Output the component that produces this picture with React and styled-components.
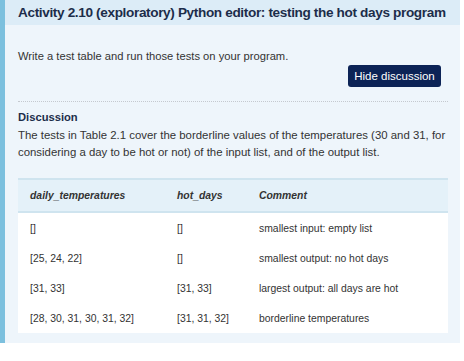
import styled, { createGlobalStyle } from "styled-components";

const GlobalStyle = createGlobalStyle`
  body {
    margin: 0;
    background: #ffffff;
    font-family: "Liberation Sans", Arial, sans-serif;
  }
`;

const Panel = styled.div`
  width: 460px;
  height: 343px;
  background: #eef5fb;
  border-left: 5px solid #7cc0de;
  box-sizing: border-box;
  overflow: hidden;
`;

const TitleBar = styled.div`
  background: #dcecf7;
  height: 25px;
  padding: 0 0 0 13px;
  display: flex;
  align-items: center;
`;

const Title = styled.h2`
  margin: 0;
  font-size: 13.6px;
  font-weight: bold;
  letter-spacing: -0.36px;
  color: #1c2d4a;
  white-space: nowrap;
`;

const Body = styled.div`
  padding: 0 8px 0 13px;
`;

const Intro = styled.p`
  margin: 25px 0 0;
  font-size: 11.2px;
  color: #333;
`;

const ButtonRow = styled.div`
  display: flex;
  justify-content: flex-end;
  margin-top: 3px;
  padding-right: 11px;
`;

const Button = styled.button`
  background: #0c2356;
  color: #fff;
  border: none;
  border-radius: 3px;
  font-family: inherit;
  font-size: 11.5px;
  width: 93px;
  height: 22px;
  padding: 0;
`;

const Divider = styled.hr`
  border: none;
  border-top: 1px dotted #c5c9cf;
  margin: 14px 0 0;
  width: 430px;
`;

const Heading = styled.h3`
  margin: 9px 0 0;
  font-size: 11.2px;
  font-weight: bold;
  color: #1c2d4a;
`;

const Para = styled.p`
  margin: 4px 0 0;
  font-size: 11.4px;
  line-height: 17px;
  color: #333;
`;

const Table = styled.table`
  margin-top: 17px;
  width: 430px;
  border-collapse: collapse;
  background: #fff;
  font-size: 10.4px;
  color: #333;
`;

const Head = styled.th`
  background: #e4f1f9;
  border-top: 2px solid #cfe4ef;
  border-bottom: 2px solid #cfe4ef;
  height: 31px;
  text-align: left;
  font-style: italic;
  font-weight: bold;
  color: #333;
  padding: 0 0 0 ${(p) => p.$pad}px;
  width: ${(p) => p.$w}px;
`;

const Cell = styled.td`
  height: 30px;
  padding: 0 0 0 ${(p) => p.$pad}px;
`;

const rows = [
  ["[]", "[]", "smallest input: empty list"],
  ["[25, 24, 22]", "[]", "smallest output: no hot days"],
  ["[31, 33]", "[31, 33]", "largest output: all days are hot"],
  ["[28, 30, 31, 30, 31, 32]", "[31, 31, 32]", "borderline temperatures"],
];

export default function App() {
  return (
    <>
      <GlobalStyle />
      <Panel>
        <TitleBar>
          <Title>Activity 2.10 (exploratory) Python editor: testing the hot days program</Title>
        </TitleBar>
        <Body>
          <Intro>Write a test table and run those tests on your program.</Intro>
          <ButtonRow>
            <Button>Hide discussion</Button>
          </ButtonRow>
          <Divider />
          <Heading>Discussion</Heading>
          <Para>
            The tests in Table 2.1 cover the borderline values of the temperatures (30 and 31, for
            considering a day to be hot or not) of the input list, and of the output list.
          </Para>
          <Table>
            <thead>
              <tr>
                <Head $pad={12} $w={147}>daily_temperatures</Head>
                <Head $pad={0} $w={82}>hot_days</Head>
                <Head $pad={0}>Comment</Head>
              </tr>
            </thead>
            <tbody>
              {rows.map((r) => (
                <tr key={r[0]}>
                  <Cell $pad={12}>{r[0]}</Cell>
                  <Cell $pad={0}>{r[1]}</Cell>
                  <Cell $pad={0}>{r[2]}</Cell>
                </tr>
              ))}
            </tbody>
          </Table>
        </Body>
      </Panel>
    </>
  );
}
